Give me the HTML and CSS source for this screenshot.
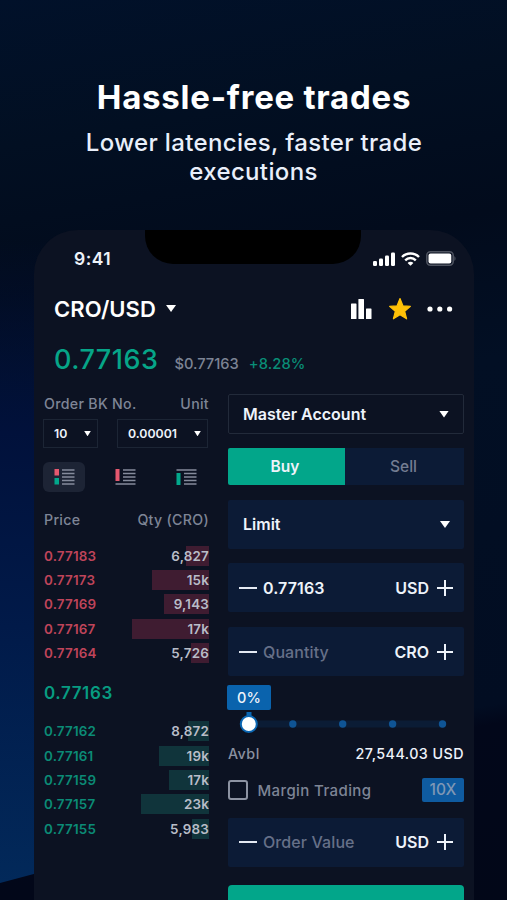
FILE: index.html
```html
<!DOCTYPE html>
<html lang="en">
<head>
    <meta charset="UTF-8">
    <meta name="viewport" content="width=device-width, initial-scale=1.0">
    <title>Hassle-free trades</title>
    <link rel="stylesheet" href="styles.css">
</head>
<body>

<div class="intro">
    <h1>Hassle-free trades</h1>
    <p>Lower latencies, faster trade<br>executions</p>
</div>

<div class="phone">
    <div class="notch"></div>

    <!-- Status bar -->
    <div class="status">
        <span class="time">9:41</span>
        <div class="status-icons">
            <svg width="22" height="14" viewBox="0 0 22 14" fill="#fff">
                <rect x="0" y="9" width="4" height="5" rx="1.2"/>
                <rect x="6" y="6.5" width="4" height="7.5" rx="1.2"/>
                <rect x="12" y="3.5" width="4" height="10.5" rx="1.2"/>
                <rect x="18" y="0.5" width="4" height="13.5" rx="1.2"/>
            </svg>
            <svg width="19" height="14" viewBox="0 0 19 14" fill="none" stroke="#fff" stroke-width="2.4">
                <path d="M1 5C5.6 0.3 13.4 0.3 18 5"/>
                <path d="M4.2 8.3C7.2 5.3 11.8 5.3 14.8 8.3"/>
                <path d="M9.5 13.8L6.6 10.9C8.2 9.4 10.8 9.4 12.4 10.9Z" fill="#fff" stroke="none"/>
            </svg>
            <svg width="30" height="15" viewBox="0 0 30 15">
                <rect x="0.8" y="0.8" width="26.4" height="13.4" rx="3.6" fill="none" stroke="#4d525f" stroke-width="1.6"/>
                <rect x="2.5" y="2.5" width="22.8" height="10" rx="2" fill="#fff"/>
                <path d="M28.3 5.2C30 5.8 30 9.2 28.3 9.8Z" fill="#4d525f"/>
            </svg>
        </div>
    </div>

    <!-- Pair header -->
    <div class="pair">
        <span class="pair-name">CRO/USD</span>
        <span class="arrow"></span>
        <div class="pair-icons">
            <svg width="21" height="20" viewBox="0 0 21 20" fill="#fff">
                <rect x="0" y="4.5" width="5.5" height="15.5" rx="0.6"/>
                <rect x="7.4" y="0" width="5.6" height="20" rx="0.6"/>
                <rect x="15" y="9.5" width="5.5" height="10.5" rx="0.6"/>
            </svg>
            <svg width="24" height="24" viewBox="0 0 24 24">
                <path d="M12 1.6L15 8.9L22.4 9.4L16.7 14.3L18.6 21.8L12 17.8L5.4 21.8L7.3 14.3L1.6 9.4L9 8.9Z" fill="#ffc107" stroke="#ffc107" stroke-width="1.2" stroke-linejoin="round"/>
            </svg>
            <svg width="26" height="6" viewBox="0 0 26 6" fill="#fff">
                <circle cx="3" cy="3" r="2.6"/>
                <circle cx="12.8" cy="3" r="2.6"/>
                <circle cx="22.6" cy="3" r="2.6"/>
            </svg>
        </div>
    </div>

    <div class="ticker">
        <span class="last">0.77163</span>
        <span class="usd">$0.77163</span>
        <span class="change">+8.28%</span>
    </div>

    <div class="columns">
        <!-- Order book -->
        <div class="book">
            <div class="labels">
                <span>Order BK No.</span>
                <span>Unit</span>
            </div>
            <div class="selects">
                <div class="mini-select rows-count"><span>10</span><i class="arrow small"></i></div>
                <div class="mini-select unit"><span>0.00001</span><i class="arrow small"></i></div>
            </div>
            <div class="views">
                <div class="view active">
                    <svg width="21" height="16" viewBox="0 0 21 16">
                        <rect x="0.5" y="0" width="4.5" height="6.5" fill="#e5586f"/>
                        <rect x="0.5" y="9" width="4.5" height="6.5" fill="#02a88c"/>
                        <path d="M8 1H20.5M8 4.5H20.5M8 8H20.5M8 11.5H20.5M8 15H20.5" stroke="#858b9c" stroke-width="1.7"/>
                    </svg>
                </div>
                <div class="view">
                    <svg width="21" height="16" viewBox="0 0 21 16">
                        <rect x="0.5" y="0" width="4" height="12" fill="#e5586f"/>
                        <path d="M8 1H20.5M8 4.5H20.5M8 8H20.5M8 11.5H20.5M0.5 15H20.5" stroke="#858b9c" stroke-width="1.7"/>
                    </svg>
                </div>
                <div class="view">
                    <svg width="21" height="16" viewBox="0 0 21 16">
                        <rect x="0.5" y="4" width="4" height="12" fill="#02a88c"/>
                        <path d="M0.5 1H20.5M8 4.5H20.5M8 8H20.5M8 11.5H20.5M8 15H20.5" stroke="#858b9c" stroke-width="1.7"/>
                    </svg>
                </div>
            </div>
            <div class="labels head">
                <span>Price</span>
                <span>Qty (CRO)</span>
            </div>
            <div class="orders asks">
                <div class="order"><span>0.77183</span><b style="--depth: 23px">6,827</b></div>
                <div class="order"><span>0.77173</span><b style="--depth: 57px">15k</b></div>
                <div class="order"><span>0.77169</span><b style="--depth: 45px">9,143</b></div>
                <div class="order"><span>0.77167</span><b style="--depth: 77px">17k</b></div>
                <div class="order"><span>0.77164</span><b style="--depth: 18px">5,726</b></div>
            </div>
            <div class="mid">0.77163</div>
            <div class="orders bids">
                <div class="order"><span>0.77162</span><b style="--depth: 21px">8,872</b></div>
                <div class="order"><span>0.77161</span><b style="--depth: 50px">19k</b></div>
                <div class="order"><span>0.77159</span><b style="--depth: 40px">17k</b></div>
                <div class="order"><span>0.77157</span><b style="--depth: 68px">23k</b></div>
                <div class="order"><span>0.77155</span><b style="--depth: 17px">5,983</b></div>
            </div>
        </div>

        <!-- Order form -->
        <div class="form">
            <div class="account"><span>Master Account</span><i class="arrow"></i></div>
            <div class="tabs">
                <div class="tab buy">Buy</div>
                <div class="tab sell">Sell</div>
            </div>
            <div class="field type"><span>Limit</span><i class="arrow"></i></div>
            <div class="field">
                <i class="minus"></i><span class="value">0.77163</span>
                <span class="unit-name">USD</span><i class="plus"></i>
            </div>
            <div class="field">
                <i class="minus"></i><span class="value hint">Quantity</span>
                <span class="unit-name">CRO</span><i class="plus"></i>
            </div>
            <div class="slider">
                <div class="tip">0%</div>
                <svg width="236" height="24" viewBox="0 0 236 24">
                    <rect x="20" y="8.5" width="198" height="7" rx="3.5" fill="#0b1c35"/>
                    <rect x="18.5" y="0" width="5" height="6" fill="#0a66b2"/>
                    <g fill="#0f5494">
                        <circle cx="64.8" cy="12" r="3.7"/>
                        <circle cx="114.7" cy="12" r="3.7"/>
                        <circle cx="164.6" cy="12" r="3.7"/>
                        <circle cx="214.5" cy="12" r="3.7"/>
                    </g>
                    <circle cx="20.8" cy="12" r="8" fill="#fff" stroke="#0a66b2" stroke-width="2"/>
                </svg>
            </div>
            <div class="available"><span class="avbl">Avbl</span><span>27,544.03 USD</span></div>
            <div class="margin">
                <i class="checkbox"></i>
                <span class="margin-label">Margin Trading</span>
                <span class="leverage">10X</span>
            </div>
            <div class="field total">
                <i class="minus"></i><span class="value hint">Order Value</span>
                <span class="unit-name">USD</span><i class="plus"></i>
            </div>
            <div class="submit"></div>
        </div>
    </div>
</div>

</body>
</html>
```
FILE: styles.css
```css
* {
    box-sizing: border-box;
}
body {
    margin: 0;
    height: 900px;
    overflow: hidden;
    position: relative;
    font-family: Inter, "Liberation Sans", sans-serif;
    font-weight: 500;
    color: #eef3fa;
    background: linear-gradient(170deg, #01112a 0%, #020f22 15%, #020b1c 30%, #020f24 45%, #020d22 80%, #02071a 82%, #020718 100%);
}
/* blue glow on the left edge behind the phone */
body::before {
    content: "";
    position: absolute;
    left: 0;
    top: 240px;
    width: 60px;
    height: 643px;
    background: linear-gradient(to bottom, rgba(1, 20, 60, 0) 0%, #01113b 30%, #011a49 60%, #02295a 100%);
    clip-path: polygon(0 0, 100% 0, 100% 97.5%, 0 100%);
}
.intro {
    height: 230px;
    padding-top: 77px;
    text-align: center;
}
h1 {
    margin: 0;
    font-size: 33px;
    line-height: 40px;
    font-weight: 700;
    letter-spacing: 0.75px;
    text-indent: 1px;
    color: #fff;
}
.intro p {
    margin: 11px 0 0;
    font-size: 24px;
    line-height: 29.4px;
    font-weight: 450;
    letter-spacing: 0.35px;
    text-indent: 1px;
    color: #e9effa;
}
.phone {
    position: relative;
    width: 440px;
    height: 670px;
    margin-left: 34px;
    border-radius: 44px 44px 0 0;
    background: #0c1222;
    overflow: hidden;
}
.notch {
    position: absolute;
    left: 111px;
    top: 0;
    width: 216px;
    height: 34px;
    background: #000;
    border-radius: 0 0 28px 28px;
}
.status {
    height: 57px;
    padding: 0 18px 0 40px;
    display: flex;
    justify-content: space-between;
    align-items: center;
}
.time {
    font-size: 17.5px;
    font-weight: 600;
    letter-spacing: 0.5px;
}
.status-icons {
    display: flex;
    align-items: center;
    gap: 6px;
}
.pair {
    height: 43px;
    padding: 0 21px 0 20px;
    display: flex;
    align-items: center;
}
.pair-name {
    font-size: 22px;
    font-weight: 600;
    letter-spacing: 0.1px;
    color: #fff;
}
.pair-icons {
    margin-left: auto;
    display: flex;
    align-items: center;
    gap: 15.5px;
}
.arrow {
    width: 10px;
    height: 7px;
    background: #fff;
    clip-path: polygon(0 0, 100% 0, 50% 100%);
}
.arrow.small {
    width: 7px;
    height: 5.5px;
}
.pair .arrow {
    margin-left: 10px;
}
.ticker {
    height: 64px;
    padding-left: 20px;
    display: flex;
    align-items: baseline;
    line-height: 60px;
}
.last {
    font-size: 27px;
    font-weight: 550;
    letter-spacing: 0.5px;
    color: #06a588;
}
.usd {
    margin-left: 16px;
    font-size: 14.7px;
    color: #7c8394;
}
.change {
    margin-left: 10px;
    font-size: 14.7px;
    letter-spacing: 0.1px;
    color: #098e77;
}
.columns {
    display: flex;
    gap: 19px;
    padding-left: 10px;
}

/* Order book */
.book {
    width: 165px;
}
.labels {
    height: 25px;
    line-height: 20px;
    display: flex;
    justify-content: space-between;
    font-size: 14.2px;
    letter-spacing: 0.3px;
    color: #7e8596;
}
.selects {
    display: flex;
    justify-content: space-between;
    margin: 0 1px 14px -1px;
}
.mini-select {
    height: 29px;
    display: flex;
    align-items: center;
    justify-content: space-between;
    padding: 0 6px 0 10px;
    border: 1px solid #1c2535;
    font-size: 12.3px;
    font-weight: 600;
}
.rows-count {
    width: 55px;
}
.mini-select.unit {
    width: 91px;
}
.views {
    display: flex;
    gap: 19px;
    height: 30px;
    margin-left: -1px;
}
.view {
    width: 42px;
    border-radius: 6px;
    display: flex;
    align-items: center;
    justify-content: center;
}
.view.active {
    background: #1d2435;
}
.labels.head {
    height: 51px;
    line-height: 55px;
}
.orders {
    position: relative;
    top: 0.5px;
}
.order {
    height: 24.4px;
    display: flex;
    justify-content: space-between;
    align-items: center;
    font-size: 13.4px;
    font-weight: 600;
    letter-spacing: 0.2px;
}
.order b {
    height: 20px;
    line-height: 20px;
    min-width: 80px;
    text-align: right;
    font-weight: 600;
    color: #b9bdc8;
    background-repeat: no-repeat;
    background-position: right;
    background-size: var(--depth) 100%;
}
.asks {
    color: #bf445a;
}
.asks b {
    background-image: linear-gradient(#3f1c31, #3f1c31);
}
.bids {
    color: #0b8b76;
}
.bids b {
    background-image: linear-gradient(#10343b, #10343b);
}
.mid {
    height: 53.5px;
    line-height: 56px;
    font-size: 17px;
    letter-spacing: 0.6px;
    font-weight: 600;
    color: #079c81;
}

/* Order form */
.form {
    width: 236px;
    font-size: 16px;
}
.account {
    height: 40px;
    padding: 0 14px;
    display: flex;
    align-items: center;
    justify-content: space-between;
    border: 1px solid #222a3a;
    border-radius: 2px;
    font-weight: 600;
}
.tabs {
    display: flex;
    height: 37px;
    margin: 14px 0 15px;
    line-height: 37px;
    text-align: center;
    font-size: 15.5px;
}
.tab {
    width: 119px;
    background: #0c1b36;
}
.tab.buy {
    width: 117px;
    padding-right: 3px;
    background: #02a68a;
    border-radius: 2px 0 0 2px;
    font-weight: 600;
}
.tab.sell {
    padding-right: 2px;
    color: #747d92;
}
.field {
    height: 49px;
    margin-bottom: 15px;
    padding: 0 11px;
    display: flex;
    align-items: center;
    background: #0c1b36;
    border-radius: 2px;
    font-weight: 600;
}
.type {
    justify-content: space-between;
    padding: 0 14px 0 15px;
    margin-bottom: 14px;
}
.type span {
    margin-top: -1px;
}
.minus {
    width: 18px;
    height: 2px;
    background: #e4e9f2;
}
.value {
    margin-left: 6px;
    letter-spacing: 0.1px;
}
.hint {
    font-weight: 500;
    color: #667088;
}
.unit-name {
    margin-left: auto;
}
.plus {
    width: 16px;
    height: 16px;
    margin-left: 8px;
    background: linear-gradient(#eef3fa, #eef3fa) center / 16px 2px no-repeat, linear-gradient(#eef3fa, #eef3fa) center / 2px 16px no-repeat;
}
.slider {
    height: 65px;
    margin-top: -6px;
    display: flex;
    flex-direction: column;
}
.tip {
    width: 44px;
    height: 25px;
    margin: 0 0 2px -1px;
    line-height: 25px;
    text-align: center;
    font-size: 14.5px;
    background: #0a63ad;
    border-radius: 2px;
}
.available {
    display: flex;
    justify-content: space-between;
    height: 27px;
    margin-top: -10px;
    line-height: 27px;
    font-size: 14.3px;
    letter-spacing: 0.45px;
}
.avbl {
    color: #8a90a0;
}
.margin {
    display: flex;
    align-items: center;
    height: 24px;
    margin: 11px 0 15.5px;
}
.checkbox {
    width: 20px;
    height: 20px;
    border: 2px solid #8d93a2;
    border-radius: 3px;
}
.margin-label {
    margin-left: 9.5px;
    font-size: 15px;
    letter-spacing: 0.4px;
    color: #7e8596;
}
.leverage {
    margin-left: auto;
    width: 42px;
    height: 24px;
    line-height: 24px;
    text-align: center;
    border-radius: 2px;
    background: #0f5ba0;
    color: #7f97b5;
    font-size: 15.5px;
}
.total {
    margin-bottom: 18px;
}
.submit {
    height: 40px;
    background: #02a68a;
    border-radius: 4px 4px 0 0;
}
```
